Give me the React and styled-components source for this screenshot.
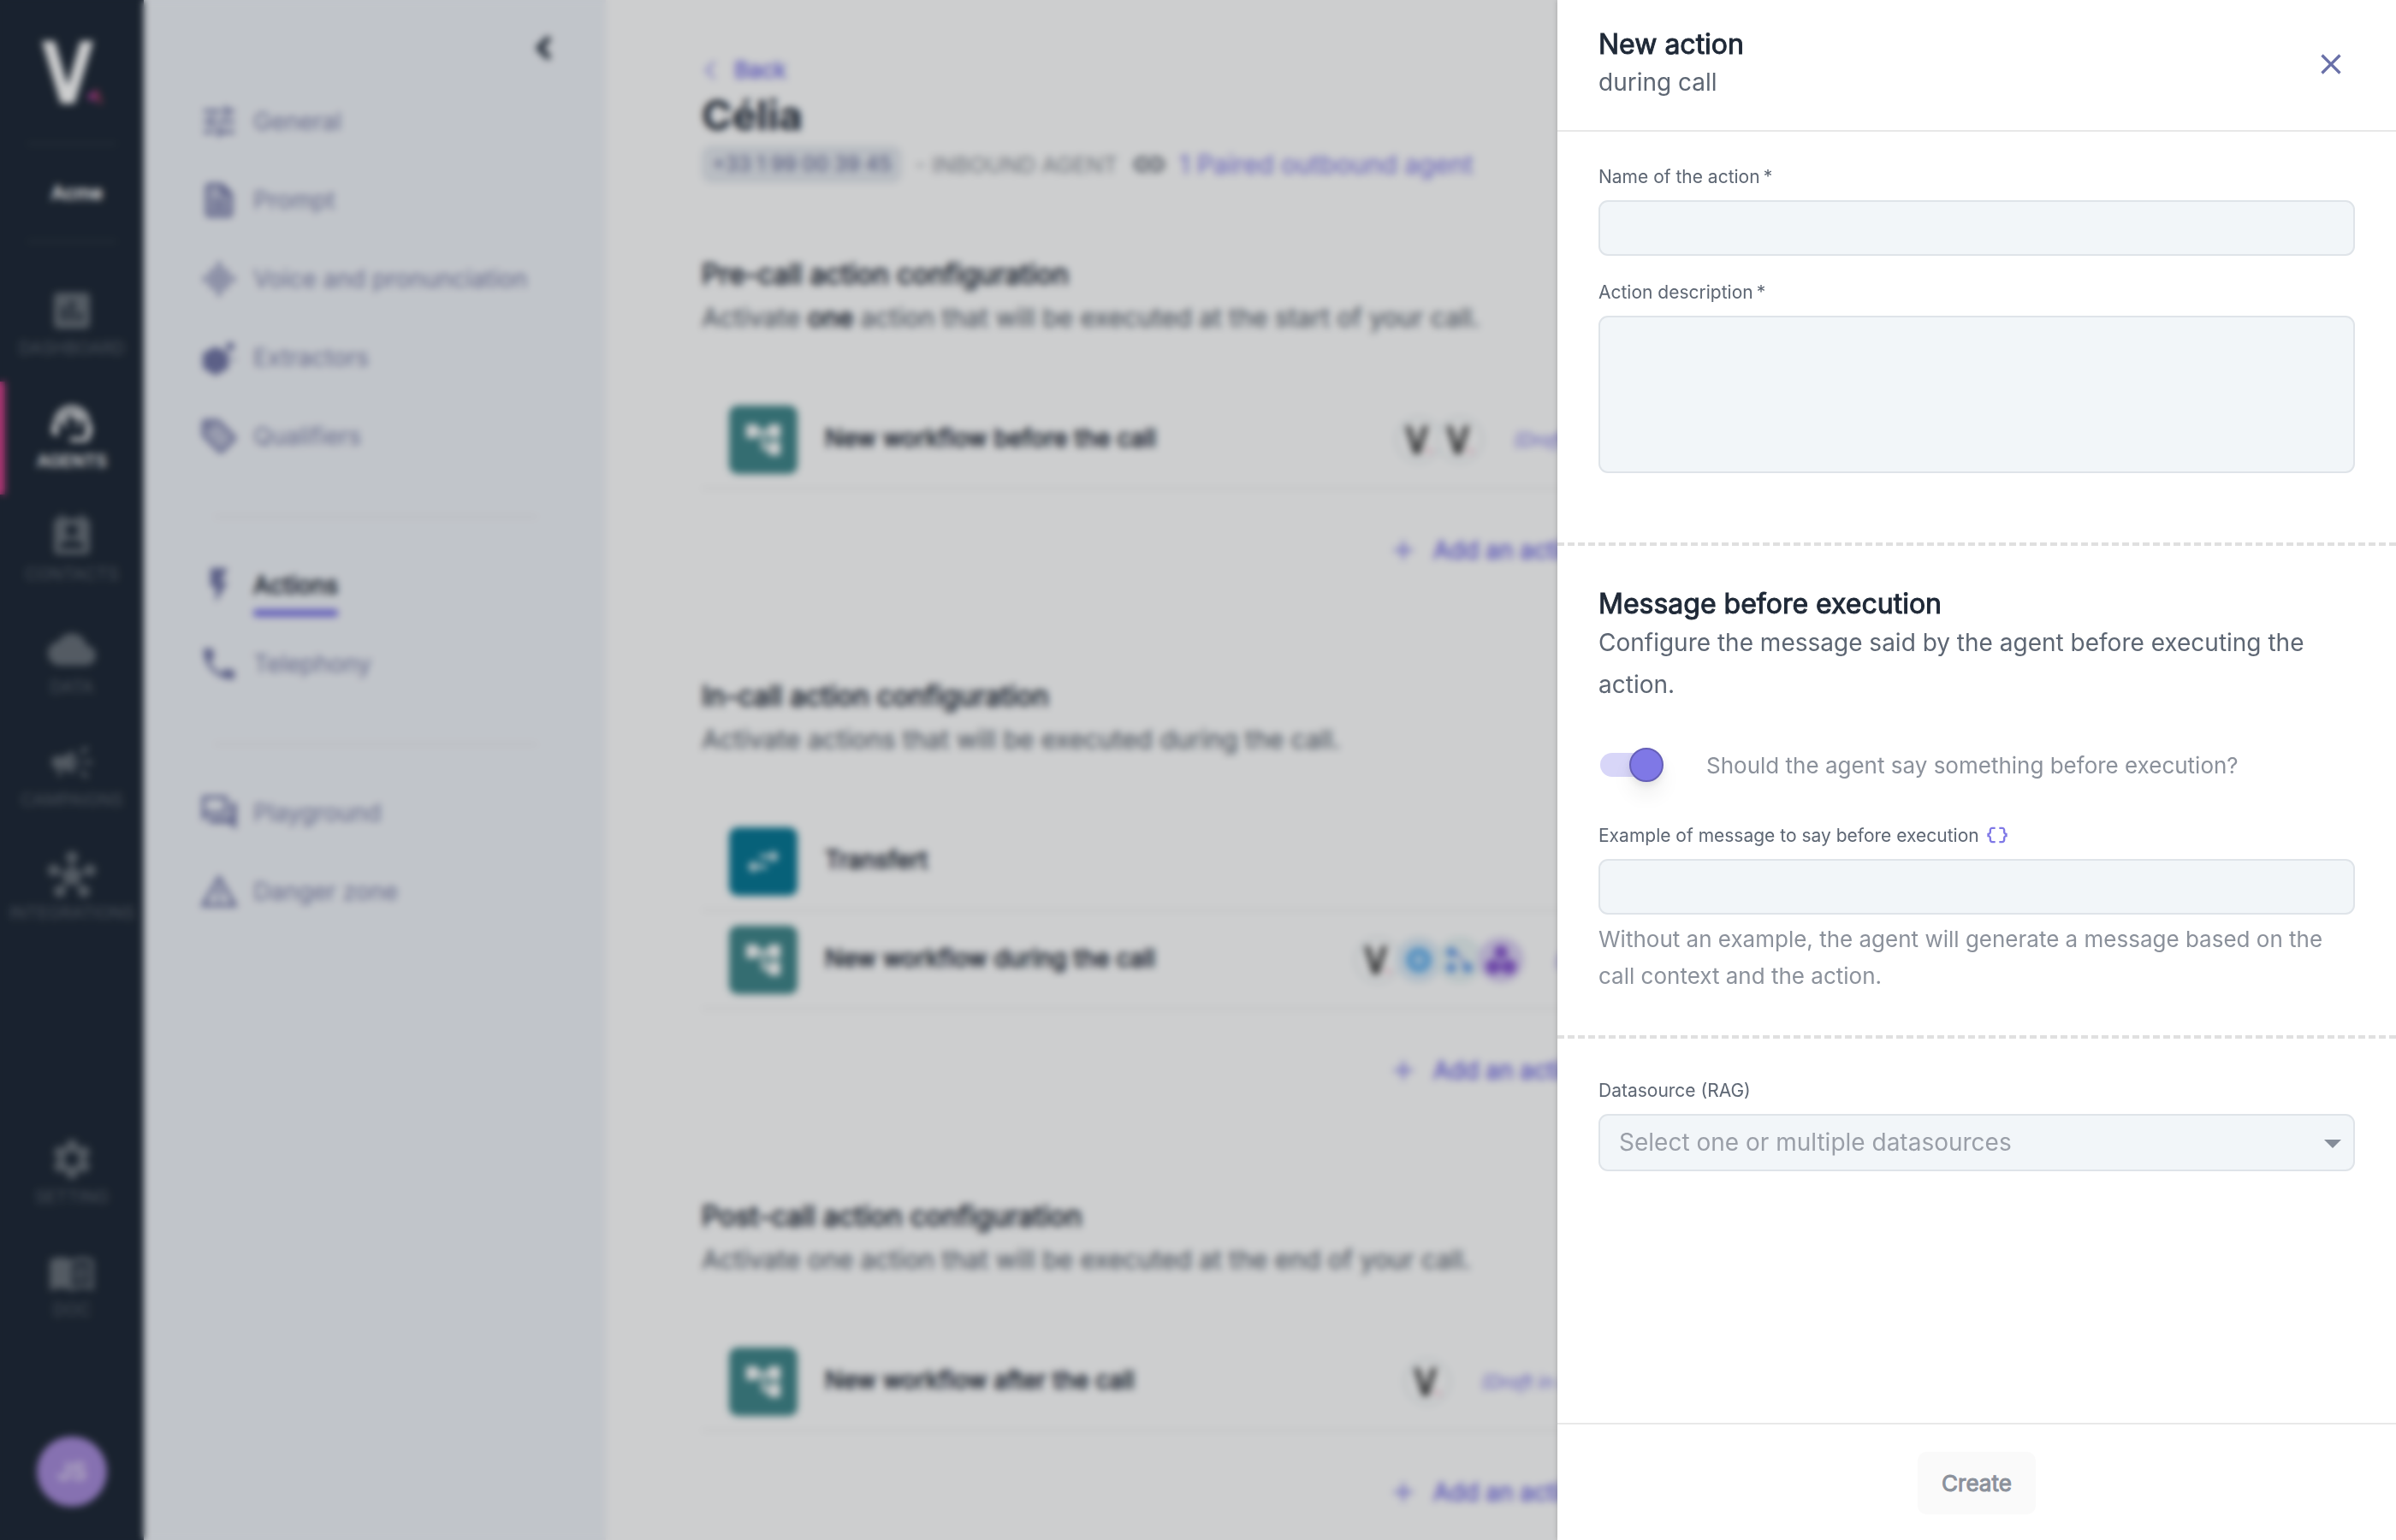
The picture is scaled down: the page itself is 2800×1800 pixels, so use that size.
import React from 'react';
import styled, { createGlobalStyle, css } from 'styled-components';
import {
  MdAccountTree,
  MdArrowDropDown,
  MdAssessment,
  MdCampaign,
  MdClose,
  MdCloud,
  MdDataObject,
  MdFlashOn,
  MdGraphicEq,
  MdHub,
  MdLink,
  MdOutlineMenuBook,
  MdOutlineQuestionAnswer,
  MdPermContactCalendar,
  MdPhone,
  MdSettings,
  MdSupportAgent,
  MdSwapHoriz,
  MdTune,
  MdWarningAmber,
} from 'react-icons/md';
import { ChevronLeft, Plus } from 'lucide-react';

const colors = {
  ink: '#1f2937',
  body: '#5d6673',
  muted: '#8b919b',
  primary: '#7f78e6',
  nav: '#7276a6',
  line: '#e8e8e8',
  field: '#f2f6f9',
};

// Headings are the regular cut with a thicker outline
const heavy = css`
  font-weight: 400;
  -webkit-text-stroke: 1px;
`;

const GlobalStyle = createGlobalStyle`
  *, *::after {
    box-sizing: border-box;
  }

  body {
    margin: 0;
    background: #fff;
    color: ${colors.ink};
    font-family: Inter, "Liberation Sans", sans-serif;
    font-size: 28px;
  }

  button, input, textarea, select {
    font: inherit;
    color: inherit;
  }

  button {
    padding: 0;
    border: 0;
    background: none;
    cursor: pointer;
  }

  h1, h2, p, ul {
    margin: 0;
    padding: 0;
  }

  a {
    color: inherit;
    text-decoration: none;
  }

  svg {
    display: block;
    flex: none;
  }
`;

/*----- Page -----*/

const Page = styled.div`
  display: grid;
  grid-template-columns: 168px 540px 1fr;
  height: 100vh;
  overflow: hidden;
`;

const Backdrop = styled.div`
  position: fixed;
  inset: 0;
  background: rgba(5, 9, 15, 0.2);
  backdrop-filter: blur(4px);
`;

/*----- Rail -----*/

const Rail = styled.nav`
  display: flex;
  flex-direction: column;
  align-items: center;
  padding: 44px 0 39px;
  background: ${colors.ink};
  color: #fff;
`;

const RailLogo = styled.a`
  margin-bottom: 43px;
`;

const RailRule = styled.hr`
  width: 104px;
  margin: 0;
  border: 0;
  border-top: 2px solid #303b49;
`;

const Workspace = styled.button`
  height: 112px;
  padding-left: 12px;
  font-size: 22px;
  ${heavy}
`;

const RailGroup = styled.div`
  align-self: stretch;
  display: flex;
  flex-direction: column;
  margin-top: ${props => props.$top};
`;

const RailLink = styled.a`
  display: flex;
  flex-direction: column;
  align-items: center;
  gap: 4px;
  height: 132px;
  padding-top: 21px;
  border-left: 6px solid transparent;
  border-right: 6px solid transparent;
  color: #59616c;
  font-size: 20px;
  line-height: 24px;

  svg {
    color: #687079;
  }

  ${props => props.$active && css`
    border-left-color: #d6408c;
    color: #fff;
    font-weight: 600;

    svg {
      color: #fff;
    }
  `}
`;

const Avatar = styled.button`
  width: 82px;
  height: 82px;
  margin-top: 109px;
  border-radius: 50%;
  background: #a78bda;
  color: #e4dcf2;
  font-size: 28px;
  font-weight: 600;
`;

/*----- Sidebar -----*/

const Sidebar = styled.aside`
  display: flex;
  flex-direction: column;
  background: #f1f4f9;
`;

const CollapseButton = styled.button`
  display: flex;
  align-self: flex-end;
  margin: 36px 53px 20px 0;
  color: ${colors.ink};
`;

const SideLink = styled.a`
  display: flex;
  align-items: center;
  gap: 16px;
  height: 92px;
  padding-left: 64px;
  color: #7f83ab;

  svg {
    color: ${colors.nav};
  }

  ${props => props.$active && css`
    color: ${colors.ink};
    ${heavy}
  `}
`;

const SideText = styled.span`
  position: relative;

  ${props => props.$active && css`
    &::after {
      content: '';
      position: absolute;
      left: 0;
      right: 0;
      bottom: -20px;
      height: 9px;
      border-radius: 4px;
      background: ${colors.primary};
    }
  `}
`;

const SideRule = styled.hr`
  margin: 47px 80px 33px 82px;
  border: 0;
  border-top: 2px solid #e3e6eb;
`;

/*----- Agent page -----*/

const Main = styled.main`
  display: flex;
  flex-direction: column;
  padding: 64px 140px 0 112px;
  background: #fff;
`;

const BackLink = styled.a`
  display: flex;
  align-items: center;
  gap: 10px;
  color: ${colors.primary};
  line-height: 36px;

  svg {
    margin-left: -8px;
  }
`;

const BackText = styled.span`
  font-size: 26px;
  ${heavy}
`;

const AgentName = styled.h1`
  font-size: 48px;
  font-weight: 700;
  line-height: 70px;
`;

const AgentMeta = styled.div`
  display: flex;
  align-items: center;
  gap: 16px;
  height: 44px;
  color: #8b9099;
  font-size: 26px;
`;

const Phone = styled.span`
  padding: 0 12px;
  border-radius: 12px;
  background: #e6eaf0;
  color: #7276a0;
  font-size: 24px;
  font-weight: 500;
  line-height: 44px;
`;

const Linked = styled.span`
  display: flex;
  align-items: center;
  gap: 14px;

  svg {
    color: #4b5260;
  }

  a {
    color: ${colors.primary};
    font-size: 30px;
  }
`;

const Sections = styled.div`
  display: flex;
  flex-direction: column;
  gap: 114px;
  padding-top: 82px;
`;

const SectionTitle = styled.h2`
  font-size: 32px;
  line-height: 50px;
  ${heavy}
`;

const SectionText = styled.p`
  color: #4f5866;
  font-size: 30px;
  line-height: 50px;

  strong {
    color: ${colors.ink};
    ${heavy}
  }
`;

const Rows = styled.ul`
  margin: 61px 0 39px;
  list-style: none;
`;

const Row = styled.li`
  display: grid;
  grid-template-columns: 1fr auto 1fr;
  align-items: center;
  height: 115px;
  padding: 0 4px 0 32px;
  border-bottom: 2px solid #f0f0f0;
`;

const RowTitle = styled.div`
  display: flex;
  align-items: center;
  gap: 32px;
`;

const RowName = styled.span`
  padding-bottom: 4px;
  ${heavy}
`;

const Tile = styled.span`
  display: flex;
  align-items: center;
  justify-content: center;
  width: 80px;
  height: 80px;
  border-radius: 10px;
  background: ${props => props.$color};
  color: #fff;
`;

const RowStatus = styled.span`
  display: flex;
  align-items: center;
  gap: 42px;
`;

const StatusText = styled.em`
  min-width: 108px;
  color: ${colors.primary};
  font-size: 22px;
`;

const Badges = styled.span`
  display: flex;
`;

const Badge = styled.span`
  display: flex;
  align-items: center;
  justify-content: center;
  width: 54px;
  height: 54px;
  margin-right: -6px;
  border: 2px solid ${props => props.$line || '#dde6ea'};
  border-radius: 50%;
  background: ${props => props.$color || '#fff'};
`;

const AddButton = styled.button`
  display: flex;
  align-items: center;
  gap: 18px;
  height: 64px;
  margin: 0 auto;
  color: ${colors.primary};
  ${heavy}
`;

/*----- Drawer -----*/

const Drawer = styled.form`
  position: fixed;
  top: 0;
  right: 0;
  bottom: 0;
  display: flex;
  flex-direction: column;
  width: 35%;
  background: #fff;
  box-shadow: 0 0 6px rgba(0, 0, 0, 0.2);
`;

const DrawerHeader = styled.header`
  display: flex;
  align-items: center;
  justify-content: space-between;
  padding: 31px 48px 33px;
  border-bottom: 2px solid ${colors.line};
`;

const DrawerTitle = styled.h2`
  font-size: 32px;
  line-height: 42px;
  ${heavy}
`;

const DrawerText = styled.p`
  color: ${colors.body};
  line-height: ${props => (props.$tight ? '46px' : '49px')};
`;

const CloseButton = styled.button`
  display: flex;
  margin-right: 8px;
  color: #6970a8;
`;

const DrawerBody = styled.div`
  flex: 1;
  overflow: auto;
`;

const FieldGroup = styled.section`
  padding: ${props => props.$pad};

  & + & {
    border-top: 4px dashed #e0e0e0;
  }
`;

const Field = styled.div`
  display: flex;
  flex-direction: column;
  margin-bottom: ${props => (props.$gap ? '28px' : 0)};
`;

const Label = styled.label`
  display: flex;
  align-items: center;
  gap: 7px;
  height: 28px;
  margin-bottom: 14px;
  color: ${colors.body};
  font-size: 21px;

  svg {
    color: ${colors.primary};
  }
`;

const Star = styled.span`
  margin-left: -3px;
`;

const fieldBox = css`
  display: block;
  width: 100%;
  height: 65px;
  padding: 0 24px;
  border: 2px solid #dfe4e9;
  border-radius: 11px;
  background: ${colors.field};
`;

const TextInput = styled.input`
  ${fieldBox}
`;

const TextArea = styled.textarea`
  ${fieldBox}
  height: 184px;
  padding: 16px 24px;
  resize: none;
`;

const SelectBox = styled.div`
  display: grid;
  align-items: center;

  & > * {
    grid-area: 1 / 1;
  }

  svg {
    justify-self: end;
    margin-right: 2px;
    color: #858d99;
    pointer-events: none;
  }
`;

const Select = styled.select`
  ${fieldBox}
  height: 67px;
  padding: 0 22px 2px;
  appearance: none;
  color: #9a9fa8;
`;

const SwitchRow = styled.label`
  display: flex;
  align-items: center;
  gap: 56px;
  margin: 40px 0 39px 2px;
  height: 58px;
  color: ${colors.muted};
  font-size: 26px;
`;

const Switch = styled.input`
  position: relative;
  width: 68px;
  height: 28px;
  margin: 0;
  border-radius: 14px;
  background: #d8d6f8;
  appearance: none;

  &::after {
    content: '';
    position: absolute;
    top: -6px;
    left: 0;
    width: 40px;
    height: 40px;
    border: 2px solid #655fb8;
    border-radius: 50%;
    background: ${colors.primary};
    box-shadow: 0 16px 24px rgba(0, 0, 0, 0.06), 0 4px 8px rgba(0, 0, 0, 0.08);
  }

  &:checked::after {
    left: 34px;
  }
`;

const Helper = styled.p`
  padding-top: 7px;
  color: ${colors.muted};
  font-size: 26px;
  line-height: 43px;
`;

const DrawerFooter = styled.footer`
  display: flex;
  justify-content: center;
  padding: 32px 48px 30px;
  border-top: 2px solid ${colors.line};
`;

const CreateButton = styled.button`
  height: 73px;
  padding: 0 28px;
  border-radius: 10px;
  background: #fafafa;
  color: ${colors.muted};
  font-size: 26px;
  ${heavy}
`;

/*----- Drawings -----*/

const Logo = ({ size, color, accents }) => (
  <svg width={size} height={size} viewBox="0 0 80 80" fill="none">
    <path d="M5 4h15l15 52 15-52h15L43 77H27z" fill={color} />
    <path d="M57 69l10-7v13z" fill={accents[0]} />
    <path d="M69 59l7 18h-4l-5-12z" fill={accents[1]} />
  </svg>
);

// Outline with a faint filled body
const duotone = (body, outline) => ({ size }) => (
  <svg width={size} height={size} viewBox="0 0 24 24" fill="currentColor">
    <path d={body} opacity="0.4" />
    <path d={outline} />
  </svg>
);

const PromptIcon = duotone(
  'M6 4h7l5 5v11H6z',
  'M8 16h8v2H8zm0-4h8v2H8zm6-10H6c-1.1 0-2 .9-2 2v16c0 1.1.89 2 1.99 2H18c1.1 0 2-.9 2-2V8l-6-6zm4 18H6V4h7v5h5v11z',
);

const TagIcon = duotone(
  'M4 4v7l9 9 7-7-9-9z',
  'M21.41 11.58l-9-9C12.05 2.22 11.55 2 11 2H4c-1.1 0-2 .9-2 2v7c0 .55.22 1.05.59 1.42l9 9c.36.36.86.58 1.41.58s1.05-.22 1.41-.59l7-7c.37-.36.59-.86.59-1.41s-.23-1.06-.59-1.42zM13 20.01L4 11V4h7v-.01l9 9-7 7.02zM5 6.5a1.5 1.5 0 1 0 3 0 1.5 1.5 0 1 0-3 0z',
);

const ExtractIcon = ({ size }) => (
  <svg width={size} height={size} viewBox="0 0 48 48" fill="currentColor">
    <path d="M20 11l15 8v17l-15 9-15-9V19z" />
    <circle cx="37" cy="11" r="5" />
    <circle cx="41" cy="26" r="2" />
  </svg>
);

const RingIcon = () => (
  <svg width="32" height="32" viewBox="0 0 34 34">
    <circle cx="17" cy="17" r="16" fill="#6fb6ee" />
    <path d="M17 11v12M11 17h12" stroke="#c8e2f8" strokeWidth="5" />
  </svg>
);

const BranchIcon = () => (
  <svg width="34" height="34" viewBox="0 0 34 34" fill="#6a9fe8">
    <path d="M7 8h6l13 18" fill="none" stroke="#8fa4ea" strokeWidth="3" />
    <circle cx="7" cy="8" r="6" />
    <circle cx="7" cy="26" r="6" />
    <circle cx="26" cy="26" r="6" />
  </svg>
);

const CubesIcon = () => (
  <svg width="36" height="36" viewBox="0 0 36 36" fill="#8a5ad0">
    <circle cx="18" cy="9" r="8" />
    <circle cx="9" cy="26" r="9" />
    <circle cx="27" cy="26" r="9" />
  </svg>
);

const badges = {
  logo: <Badge><Logo size={36} color="#444" accents={['#f6b6c8', '#f6b6c8']} /></Badge>,
  ring: <Badge $color="#e0edf8" $line="#dcebf4"><RingIcon /></Badge>,
  branch: <Badge $color="#eaf4f4" $line="#e0eff0"><BranchIcon /></Badge>,
  cubes: <Badge $color="#ddd3f4" $line="#ddd3f4"><CubesIcon /></Badge>,
};

/*----- Data -----*/

const railLinks = [
  { label: 'DASHBOARD', icon: MdAssessment },
  { label: 'AGENTS', icon: MdSupportAgent, active: true },
  { label: 'CONTACTS', icon: MdPermContactCalendar },
  { label: 'DATA', icon: MdCloud },
  { label: 'CAMPAIGNS', icon: MdCampaign },
  { label: 'INTEGRATIONS', icon: MdHub },
];

const railFooter = [
  { label: 'SETTING', icon: MdSettings },
  { label: 'DOC', icon: MdOutlineMenuBook },
];

const sideGroups = [
  [
    { label: 'General', icon: MdTune },
    { label: 'Prompt', icon: PromptIcon },
    { label: 'Voice and pronunciation', icon: MdGraphicEq },
    { label: 'Extractors', icon: ExtractIcon },
    { label: 'Qualifiers', icon: TagIcon },
  ],
  [
    { label: 'Actions', icon: MdFlashOn, active: true },
    { label: 'Telephony', icon: MdPhone },
  ],
  [
    { label: 'Playground', icon: MdOutlineQuestionAnswer },
    { label: 'Danger zone', icon: MdWarningAmber },
  ],
];

const sections = [
  {
    title: 'Pre-call action configuration',
    text: <>Activate <strong>one</strong> action that will be executed at the start of your call.</>,
    rows: [
      { title: 'New workflow before the call', badges: ['logo', 'logo'], status: '(Draft v1)' },
    ],
  },
  {
    title: 'In-call action configuration',
    text: 'Activate actions that will be executed during the call.',
    rows: [
      { title: 'Transfert', transfer: true },
      {
        title: 'New workflow during the call',
        badges: ['logo', 'ring', 'branch', 'cubes'],
        status: '(v2)',
      },
    ],
  },
  {
    title: 'Post-call action configuration',
    text: 'Activate one action that will be executed at the end of your call.',
    rows: [
      { title: 'New workflow after the call', badges: ['logo'], status: '(Draft in use)' },
    ],
  },
];

const renderRailLink = ({ label, icon: Icon, active }) => (
  <RailLink key={label} href="#" $active={active}>
    <Icon size={56} />
    {label}
  </RailLink>
);

const ActionRow = ({ row }) => (
  <Row>
    <RowTitle>
      <Tile $color={row.transfer ? '#087794' : '#40868a'}>
        {row.transfer ? <MdSwapHoriz size={48} /> : <MdAccountTree size={48} />}
      </Tile>
      <RowName>{row.title}</RowName>
    </RowTitle>
    {row.badges && (
      <RowStatus>
        <Badges>
          {row.badges.map((name, i) => (
            <React.Fragment key={i}>{badges[name]}</React.Fragment>
          ))}
        </Badges>
        <StatusText>{row.status}</StatusText>
      </RowStatus>
    )}
  </Row>
);

const App = () => (
  <>
    <GlobalStyle />
    <Page>
      <Rail>
        <RailLogo href="#" aria-label="Home">
          <Logo size={80} color="#fff" accents={['#b5409c', '#a83c5c']} />
        </RailLogo>
        <RailRule />
        <Workspace type="button">Acme</Workspace>
        <RailRule />
        <RailGroup $top="31px">{railLinks.map(renderRailLink)}</RailGroup>
        <RailGroup $top="auto">{railFooter.map(renderRailLink)}</RailGroup>
        <Avatar type="button">JS</Avatar>
      </Rail>

      <Sidebar>
        <CollapseButton type="button" aria-label="Collapse menu">
          <ChevronLeft size={40} strokeWidth={4} />
        </CollapseButton>
        {sideGroups.map((group, i) => (
          <React.Fragment key={i}>
            {i > 0 && <SideRule />}
            {group.map(({ label, icon: Icon, active }) => (
              <SideLink key={label} href="#" $active={active}>
                <Icon size={48} />
                <SideText $active={active}>{label}</SideText>
              </SideLink>
            ))}
          </React.Fragment>
        ))}
      </Sidebar>

      <Main>
        <BackLink href="#">
          <ChevronLeft size={36} strokeWidth={1.5} />
          <BackText>Back</BackText>
        </BackLink>
        <AgentName>Célia</AgentName>
        <AgentMeta>
          <Phone>+33 1 99 00 39 45</Phone>
          <span>- INBOUND AGENT</span>
          <Linked>
            <MdLink size={42} />
            <a href="#">1 Paired outbound agent</a>
          </Linked>
        </AgentMeta>
        <Sections>
          {sections.map(section => (
            <section key={section.title}>
              <SectionTitle>{section.title}</SectionTitle>
              <SectionText>{section.text}</SectionText>
              <Rows>
                {section.rows.map(row => <ActionRow key={row.title} row={row} />)}
              </Rows>
              <AddButton type="button">
                <Plus size={34} />
                Add an action
              </AddButton>
            </section>
          ))}
        </Sections>
      </Main>
    </Page>

    <Backdrop />

    <Drawer onSubmit={e => e.preventDefault()}>
      <DrawerHeader>
        <div>
          <DrawerTitle>New action</DrawerTitle>
          <DrawerText $tight>during call</DrawerText>
        </div>
        <CloseButton type="button" aria-label="Close">
          <MdClose size={40} />
        </CloseButton>
      </DrawerHeader>

      <DrawerBody>
        <FieldGroup $pad="38px 48px 53px">
          <Field $gap>
            <Label htmlFor="name">Name of the action <Star>*</Star></Label>
            <TextInput id="name" type="text" />
          </Field>
          <Field $gap>
            <Label htmlFor="description">Action description <Star>*</Star></Label>
            <TextArea id="description" />
          </Field>
        </FieldGroup>

        <FieldGroup $pad="47px 48px 48px">
          <DrawerTitle>Message before execution</DrawerTitle>
          <DrawerText>
            Configure the message said by the agent before executing the action.
          </DrawerText>
          <SwitchRow>
            <Switch type="checkbox" role="switch" defaultChecked />
            Should the agent say something before execution?
          </SwitchRow>
          <Field>
            <Label htmlFor="message">
              Example of message to say before execution
              <MdDataObject size={28} />
            </Label>
            <TextInput id="message" type="text" />
            <Helper>
              Without an example, the agent will generate a message based on the call context and
              the action.
            </Helper>
          </Field>
        </FieldGroup>

        <FieldGroup $pad="46px 48px">
          <Field>
            <Label htmlFor="datasource">Datasource (RAG)</Label>
            <SelectBox>
              <Select id="datasource" defaultValue="">
                <option value="">Select one or multiple datasources</option>
              </Select>
              <MdArrowDropDown size={48} />
            </SelectBox>
          </Field>
        </FieldGroup>
      </DrawerBody>

      <DrawerFooter>
        <CreateButton type="submit">Create</CreateButton>
      </DrawerFooter>
    </Drawer>
  </>
);

export default App;
